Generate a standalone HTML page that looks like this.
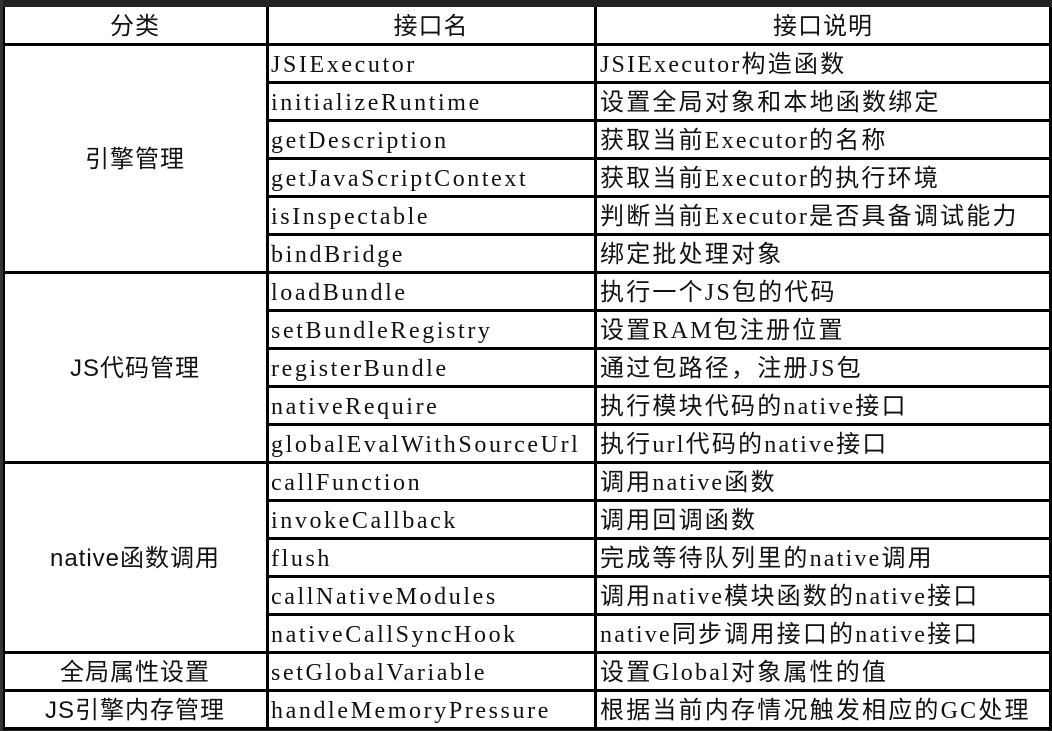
<!DOCTYPE html>
<html><head><meta charset="utf-8"><style>
html,body{margin:0;padding:0;background:#fff;}
body{width:1052px;height:731px;position:relative;overflow:hidden;font-family:"Liberation Serif","Noto Sans CJK SC",serif;color:#111;}
.c{position:absolute;box-sizing:border-box;font-size:24px;line-height:38px;white-space:nowrap;}
.h{position:absolute;background:#000;}
.t{text-align:center;font-family:"Liberation Sans","Noto Sans CJK SC",sans-serif;font-size:24px;letter-spacing:1px;}
</style></head><body>
<div style="position:absolute;left:0;top:0;width:1052px;height:7px;background:#222"></div>
<div style="position:absolute;left:0;top:728px;width:1052px;height:3px;background:#222"></div>
<div style="position:absolute;left:0;top:0;width:3px;height:731px;background:#333"></div>
<div id="g"></div>
<script>
var rows=[
["JSIExecutor","JSIExecutor构造函数"],["initializeRuntime","设置全局对象和本地函数绑定"],["getDescription","获取当前Executor的名称"],["getJavaScriptContext","获取当前Executor的执行环境"],["isInspectable","判断当前Executor是否具备调试能力"],["bindBridge","绑定批处理对象"],
["loadBundle","执行一个JS包的代码"],["setBundleRegistry","设置RAM包注册位置"],["registerBundle","通过包路径，注册JS包"],["nativeRequire","执行模块代码的native接口"],["globalEvalWithSourceUrl","执行url代码的native接口"],
["callFunction","调用native函数"],["invokeCallback","调用回调函数"],["flush","完成等待队列里的native调用"],["callNativeModules","调用native模块函数的native接口"],["nativeCallSyncHook","native同步调用接口的native接口"],
["setGlobalVariable","设置Global对象属性的值"],["handleMemoryPressure","根据当前内存情况触发相应的GC处理"]];
var groups=[["引擎管理",0,6],["JS代码管理",6,5],["native函数调用",11,5],["全局属性设置",16,1],["JS引擎内存管理",17,1]];
var h='';var X1=3,X2=267,X3=595,X4=1051,Y0=44,R=38;
function line(x,y,w,hh){h+='<div class="h" style="left:'+x+'px;top:'+y+'px;width:'+w+'px;height:'+hh+'px"></div>';}
h+='<div class="c t" style="left:'+X1+'px;top:8px;width:'+(X2-X1)+'px;line-height:37px">分类</div>';
h+='<div class="c t" style="left:'+X2+'px;top:8px;width:'+(X3-X2)+'px;line-height:37px">接口名</div>';
h+='<div class="c t" style="left:'+X3+'px;top:8px;width:'+(X4-X3)+'px;line-height:37px">接口说明</div>';
line(X1,Y0-1,X4-X1,3);
rows.forEach(function(r,i){var y=Y0+i*R;
h+='<div class="c" style="left:'+(X2+4)+'px;top:'+(y+2)+'px;letter-spacing:2.6px">'+r[0]+'</div>';
h+='<div class="c" style="left:'+(X3+5)+'px;top:'+(y+2)+'px;letter-spacing:2.2px">'+r[1]+'</div>';
line(X2,y+R-1,X4-X2,3);});
groups.forEach(function(g){var y=Y0+g[1]*R,hh=g[2]*R;
h+='<div class="c t" style="left:'+X1+'px;top:'+(y+2)+'px;width:'+(X2-X1)+'px;height:'+hh+'px;line-height:'+hh+'px">'+g[0]+'</div>';
line(X1,y+hh-1,X2-X1,3);});
line(X1,7,2,721);line(X2-1,7,3,721);line(X3-1,7,3,721);line(X4-2,7,3,721);
document.getElementById('g').innerHTML=h;
</script>
</body></html>
